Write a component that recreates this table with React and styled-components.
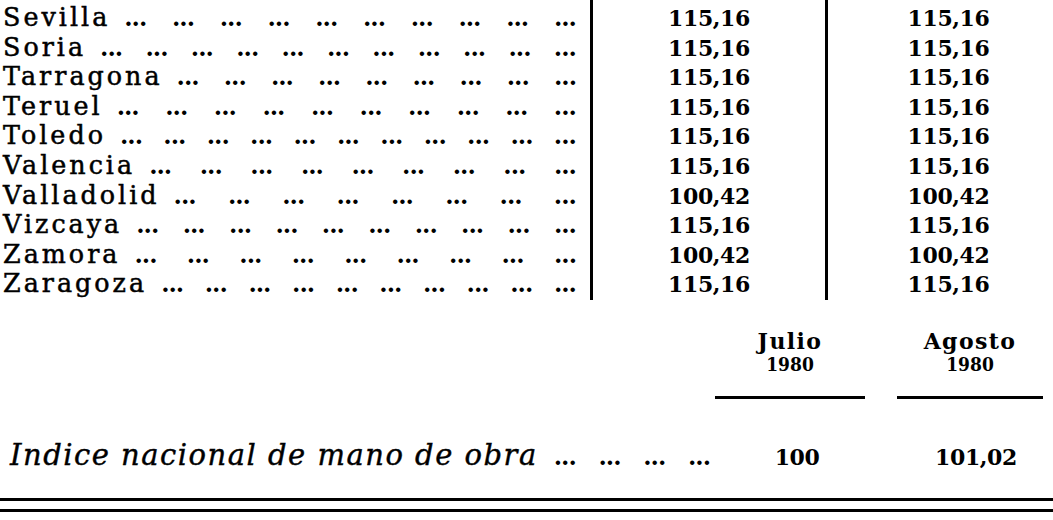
import React from 'react'
import styled, { createGlobalStyle } from 'styled-components'

const GlobalStyle = createGlobalStyle`
  html, body {
    margin: 0;
    padding: 0;
    background: #fff;
    color: #000;
  }
  body {
    font-family: "DejaVu Serif", "Liberation Serif", serif;
  }
`

const Page = styled.div`
  width: 1053px;
  height: 520px;
  overflow: hidden;
  display: flex;
  flex-direction: column;
`

const Table = styled.div`
  display: grid;
  grid-template-columns: 590px 235px 1fr;
`

const LabelCol = styled.div`
  display: flex;
  flex-direction: column;
  padding-top: 3px;
`

const ValueCol = styled.div`
  display: flex;
  flex-direction: column;
  border-left: 3px solid #000;
  padding-top: 4px;
  padding-left: ${(p) => p.$shift || '0px'};
  text-align: center;
`

const LabelRow = styled.div`
  display: flex;
  align-items: baseline;
  height: 29.6px;
  line-height: 29.6px;
  padding-left: 3px;
  padding-right: 14px;
`

const Name = styled.span`
  font-size: 25.4px;
  letter-spacing: 3px;
  white-space: nowrap;
  -webkit-text-stroke: 0.5px #000;
`

const Leaders = styled.span`
  flex: 1;
  display: flex;
  justify-content: space-between;
  margin-left: ${(p) => p.$gap || '14px'};
`

const Dots = styled.span`
  font-weight: 700;
  font-size: 24px;
  letter-spacing: -1px;
  white-space: nowrap;
`

const Value = styled.div`
  height: 29.6px;
  line-height: 29.6px;
  font-size: 22px;
  font-weight: 700;
  letter-spacing: -0.4px;
`

const Summary = styled.div`
  display: grid;
  grid-template-columns: 1fr 150px 178px;
  row-gap: 39px;
  margin-top: 29px;
  padding-right: 10px;
`

const HeadCell = styled.div`
  display: flex;
  flex-direction: column;
  align-items: center;
  padding-left: ${(p) => p.$offset || '0px'};
`

const Month = styled.div`
  font-size: 22px;
  line-height: 25px;
  font-weight: 700;
  letter-spacing: 1.4px;
`

const Year = styled.div`
  font-family: "DejaVu Serif Condensed", "DejaVu Serif", serif;
  font-stretch: condensed;
  font-size: 19px;
  line-height: 21px;
  font-weight: 700;
`

const Rule = styled.div`
  align-self: stretch;
  height: 3px;
  margin-top: 21px;
  background: #000;
`

const SummaryLabel = styled.div`
  display: flex;
  align-items: baseline;
  align-self: baseline;
  line-height: 34px;
  padding-left: 10px;
  padding-right: 5px;
`

const ItalicName = styled.span`
  font-style: italic;
  font-size: 29px;
  letter-spacing: 1.5px;
  white-space: nowrap;
  -webkit-text-stroke: 0.4px #000;
`

const SummaryValue = styled.div`
  align-self: baseline;
  text-align: center;
  line-height: 34px;
  font-size: 22px;
  font-weight: 700;
  letter-spacing: -0.4px;
  padding-left: ${(p) => p.$offset || '0px'};
`

const DoubleRule = styled.div`
  margin-top: 24px;
  height: 8px;
  border-top: 3px solid #000;
  border-bottom: 3px solid #000;
`

const rows = [
  { name: 'Sevilla', jul: '115,16', ago: '115,16', dots: 10 },
  { name: 'Soria', jul: '115,16', ago: '115,16', dots: 11 },
  { name: 'Tarragona', jul: '115,16', ago: '115,16', dots: 9 },
  { name: 'Teruel', jul: '115,16', ago: '115,16', dots: 10 },
  { name: 'Toledo', jul: '115,16', ago: '115,16', dots: 11 },
  { name: 'Valencia', jul: '115,16', ago: '115,16', dots: 9 },
  { name: 'Valladolid', jul: '100,42', ago: '100,42', dots: 8 },
  { name: 'Vizcaya', jul: '115,16', ago: '115,16', dots: 10 },
  { name: 'Zamora', jul: '100,42', ago: '100,42', dots: 9 },
  { name: 'Zaragoza', jul: '115,16', ago: '115,16', dots: 10 },
]

const LeaderDots = ({ count, gap }) => (
  <Leaders $gap={gap}>
    {Array.from({ length: count }, (_, i) => (
      <Dots key={i}>...</Dots>
    ))}
  </Leaders>
)

export default function App() {
  return (
    <Page>
      <GlobalStyle />
      <Table>
        <LabelCol>
          {rows.map((r) => (
            <LabelRow key={r.name}>
              <Name>{r.name}</Name>
              <LeaderDots count={r.dots} />
            </LabelRow>
          ))}
        </LabelCol>
        <ValueCol>
          {rows.map((r) => (
            <Value key={r.name}>{r.jul}</Value>
          ))}
        </ValueCol>
        <ValueCol $shift='16px'>
          {rows.map((r) => (
            <Value key={r.name}>{r.ago}</Value>
          ))}
        </ValueCol>
      </Table>

      <Summary>
        <div />
        <HeadCell>
          <Month>Julio</Month>
          <Year>1980</Year>
          <Rule />
        </HeadCell>
        <HeadCell $offset='32px'>
          <Month>Agosto</Month>
          <Year>1980</Year>
          <Rule />
        </HeadCell>

        <SummaryLabel>
          <ItalicName>Indice nacional de mano de obra</ItalicName>
          <LeaderDots count={4} gap='16px' />
        </SummaryLabel>
        <SummaryValue $offset='14px'>100</SummaryValue>
        <SummaryValue $offset='44px'>101,02</SummaryValue>
      </Summary>

      <DoubleRule />
    </Page>
  )
}
